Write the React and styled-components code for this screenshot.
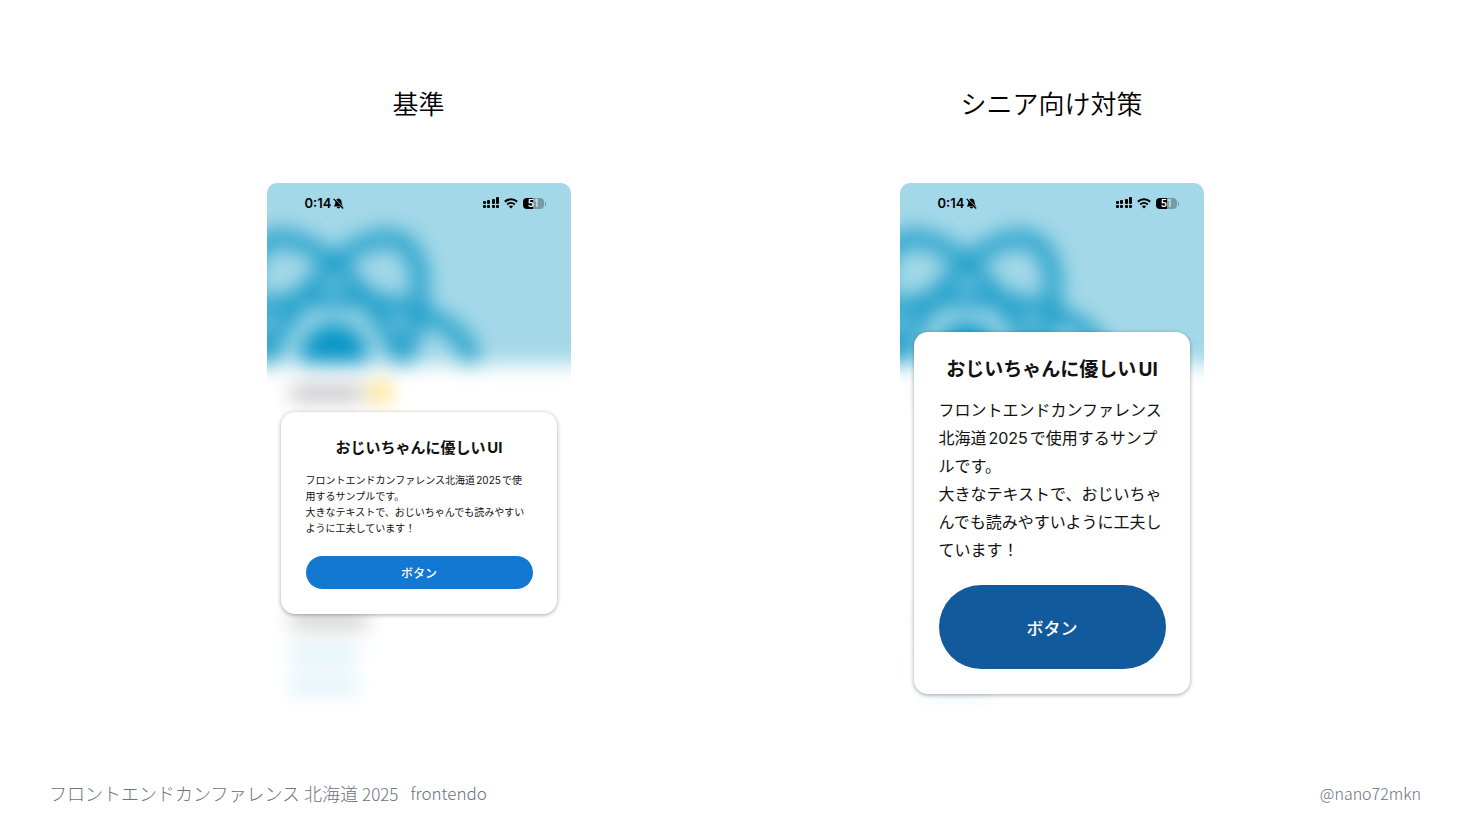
import React from "react";
import styled, { createGlobalStyle } from "styled-components";

const samples = [
  {
    id: "base",
    heading: "基準",
    senior: false,
    lines: [
      "フロントエンドカンファレンス北海道2025で使",
      "用するサンプルです。",
      "大きなテキストで、おじいちゃんでも読みやすい",
      "ように工夫しています！",
    ],
  },
  {
    id: "senior",
    heading: "シニア向け対策",
    senior: true,
    lines: [
      "フロントエンドカンファレンス",
      "北海道2025で使用するサンプ",
      "ルです。",
      "大きなテキストで、おじいちゃ",
      "んでも読みやすいように工夫し",
      "ています！",
    ],
  },
];

const BellOff = () => (
  <svg width="11" height="11" viewBox="0 0 11 11" aria-hidden="true">
    <path d="M5.5 0.400C3.300 0.600 2.400 2.200 2.400 4C2.400 6 1.600 7 0.800 8.400H10.200C9.400 7 8.600 6 8.600 4C8.600 2.200 7.700 0.600 5.500 0.400Z" />
    <path d="M3.800 9H7.200C7 10.900 4 10.900 3.800 9Z" />
    <path d="M1.600 0.400L10.800 9.600" stroke="#a3d8e8" strokeWidth="1" />
    <path d="M0.600 0.900L10.200 10.500" stroke="#000" strokeWidth="1.300" />
  </svg>
);

const Signal = () => (
  <svg width="16" height="12" viewBox="0 0 16 12" aria-hidden="true">
    <rect x="0" y="4" width="3" height="3" rx="1" />
    <rect x="4" y="3" width="3" height="4" rx="1" />
    <rect x="9" y="2" width="3" height="5" rx="1" />
    <rect x="13" y="0" width="3" height="7" rx="1" />
    {[0, 4, 9, 13].map((x) => (
      <rect key={x} x={x} y="8" width="3" height="3" rx="1" />
    ))}
  </svg>
);

const Wifi = () => (
  <svg width="14" height="11" viewBox="0 0 14 11" fill="none" stroke="#000" strokeWidth="2" aria-hidden="true">
    <path d="M0.800 3.800C4.200 0.500 9.800 0.500 13.200 3.800" />
    <path d="M3.200 6.400C5.400 4.400 8.600 4.400 10.800 6.400" />
    <path d="M4.800 8.200Q7 6.600 9.200 8.200L7 10.600Z" fill="#000" stroke="none" />
  </svg>
);

const Backdrop = ({ id }) => (
  <BackdropSvg viewBox="0 0 304 540" aria-hidden="true">
    <defs>
      <filter
        id={`blur-${id}`}
        filterUnits="userSpaceOnUse"
        x="-60"
        y="-60"
        width="424"
        height="660"
        colorInterpolationFilters="sRGB"
      >
        <feGaussianBlur stdDeviation="10" />
      </filter>
    </defs>
    <g filter={`url(#blur-${id})`}>
      <rect x="-60" y="-60" width="424" height="660" fill="#fff" />
      <rect x="-60" y="-60" width="424" height="241" fill="#a3d8e8" />
      <g fill="none" stroke="#209fca" strokeWidth="17">
        <ellipse cx="67" cy="177" rx="136" ry="61" />
        <ellipse cx="67" cy="177" rx="136" ry="61" transform="rotate(60 67 177)" />
        <ellipse cx="67" cy="177" rx="136" ry="61" transform="rotate(120 67 177)" />
      </g>
      <circle cx="67" cy="173" r="33" fill="#0896c6" />
      <rect x="-60" y="181" width="424" height="420" fill="#fff" />
      <rect x="24" y="202" width="72" height="16" fill="#c2c2c5" />
      <circle cx="113" cy="209" r="12" fill="#ffdf80" />
      <rect x="24" y="428" width="76" height="18" fill="#d0d0d0" />
      <rect x="24" y="464" width="66" height="14" fill="#d3edf6" />
      <rect x="24" y="495" width="66" height="14" fill="#d3edf6" />
    </g>
  </BackdropSvg>
);

const Phone = ({ sample }) => (
  <Screen>
    <Backdrop id={sample.id} />
    <StatusBar>
      <Clock>
        0:14
        <BellOff />
      </Clock>
      <StatusIcons>
        <Signal />
        <Wifi />
        <Battery>
          5<span>1</span>
        </Battery>
      </StatusIcons>
    </StatusBar>
    <DialogArea>
      <Dialog $senior={sample.senior}>
        <DialogTitle $senior={sample.senior}>おじいちゃんに優しいUI</DialogTitle>
        <DialogText $senior={sample.senior}>
          {sample.lines.map((line) => (
            <span key={line}>{line}</span>
          ))}
        </DialogText>
        <DialogButton type="button" $senior={sample.senior}>
          ボタン
        </DialogButton>
      </Dialog>
    </DialogArea>
  </Screen>
);

const App = () => (
  <>
    <GlobalStyle />
    <Slide>
      <Comparison>
        {samples.map((sample) => (
          <Column key={sample.id}>
            <Heading>{sample.heading}</Heading>
            <Phone sample={sample} />
          </Column>
        ))}
      </Comparison>
      <Footer>
        <FooterGroup>
          <span>
            フロントエンドカンファレンス 北海道 <Latin>2025</Latin>
          </span>
          <Latin>frontendo</Latin>
        </FooterGroup>
        <Handle>@nano72mkn</Handle>
      </Footer>
    </Slide>
  </>
);

/* Styled Components */
const GlobalStyle = createGlobalStyle`
  * {
    box-sizing: border-box;
  }

  body {
    margin: 0;
    background: #fff;
    font-family: "Noto Sans CJK JP", sans-serif;
  }
`;

const Slide = styled.div`
  display: flex;
  flex-direction: column;
  justify-content: space-between;
  min-height: 100vh;
`;

const Comparison = styled.main`
  display: grid;
  grid-template-columns: 1fr 1fr;
  padding: 83px 102px 0;
`;

const Column = styled.section`
  display: flex;
  flex-direction: column;
  align-items: center;
  gap: 60px;
`;

const Heading = styled.h2`
  margin: 0;
  font-size: 26px;
  font-weight: 350;
  line-height: 40px;
  color: #000;
`;

const Screen = styled.div`
  position: relative;
  display: flex;
  flex-direction: column;
  width: 304px;
  min-height: 540px;
  border-radius: 10px 10px 0 0;
  overflow: hidden;
`;

const BackdropSvg = styled.svg`
  position: absolute;
  inset: 0;
  width: 100%;
`;

const StatusBar = styled.div`
  position: relative;
  display: flex;
  justify-content: space-between;
  align-items: center;
  height: 40px;
  padding: 0 27px 0 38px;
`;

const Clock = styled.div`
  display: flex;
  align-items: center;
  gap: 2px;
  font: 600 13px/16px Inter, sans-serif;
`;

const StatusIcons = styled.div`
  display: flex;
  align-items: center;
  gap: 5px;
`;

const Battery = styled.div`
  position: relative;
  width: 21px;
  height: 11px;
  border-radius: 4px;
  background: linear-gradient(90deg, #000 50%, #759ba7 50%);
  color: #fff;
  font: 600 10px/11px Inter, sans-serif;
  text-align: center;

  span {
    color: #c4e2eb;
  }

  &::after {
    content: "";
    position: absolute;
    top: 4px;
    right: -2px;
    width: 1px;
    height: 4px;
    background: #759ba7;
  }
`;

const DialogArea = styled.div`
  position: relative;
  display: flex;
  flex: 1;
  flex-direction: column;
  justify-content: center;
  padding: 80px 14px 0;
`;

const Dialog = styled.div`
  display: flex;
  flex-direction: column;
  padding: ${({ $senior }) => ($senior ? "24px 24px 25px 25px" : "25px 24px 25px 25px")};
  border-radius: 14px;
  background: #fff;
  box-shadow: 0 1px 4px rgba(0, 0, 0, 0.35);
  color: #111;
  font-family: Inter, "Noto Sans CJK JP", sans-serif;
  text-autospace: normal;
`;

const DialogTitle = styled.h3`
  margin: 0 0 ${({ $senior }) => ($senior ? "12px" : "13px")};
  font-size: ${({ $senior }) => ($senior ? "19px" : "15px")};
  font-weight: 700;
  line-height: ${({ $senior }) => ($senior ? "28px" : "22px")};
  text-align: center;
  white-space: nowrap;
`;

const DialogText = styled.p`
  display: flex;
  flex-direction: column;
  margin: 0 0 ${({ $senior }) => ($senior ? "21px" : "20px")};
  font-size: ${({ $senior }) => ($senior ? "16px" : "10px")};
  line-height: ${({ $senior }) => ($senior ? "28px" : "16px")};
  white-space: nowrap;
`;

const DialogButton = styled.button`
  height: ${({ $senior }) => ($senior ? "84px" : "33px")};
  padding: 0;
  border: none;
  border-radius: 42px;
  background: ${({ $senior }) => ($senior ? "#115a9c" : "#1278d2")};
  color: #fff;
  font-family: inherit;
  font-size: ${({ $senior }) => ($senior ? "17px" : "12px")};
  font-weight: 500;
`;

const Footer = styled.footer`
  display: flex;
  justify-content: space-between;
  padding: 0 49px 20px;
  color: #6b7280;
  font-size: 18px;
  font-weight: 300;
  line-height: 28px;
`;

const FooterGroup = styled.div`
  display: flex;
  gap: 12px;
`;

const Latin = styled.span`
  font-size: 17px;
`;

const Handle = styled.span`
  font-size: 16px;
`;

export default App;
